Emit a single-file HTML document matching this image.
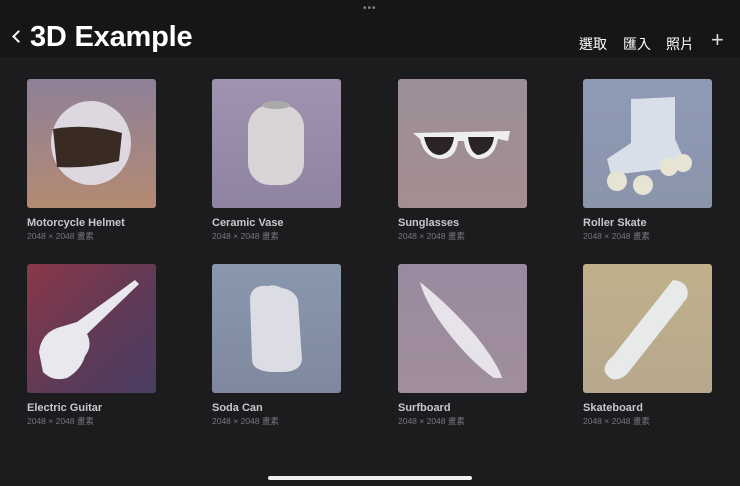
<!DOCTYPE html>
<html><head><meta charset="utf-8"><style>
*{margin:0;padding:0;box-sizing:border-box}
body{width:740px;height:486px;background:#1c1c1e;font-family:"Liberation Sans","Noto Sans CJK TC",sans-serif;color:#fff;position:relative;overflow:hidden}
.hdr{position:absolute;left:0;top:0;width:740px;height:57px;background:#161617}
.dots{position:absolute;left:363px;top:3px;font-size:10px;color:#888;letter-spacing:1px}
.title{position:absolute;left:30px;top:21px;font-size:29px;font-weight:bold;letter-spacing:-0.2px}
.back{position:absolute;left:14px;top:32px;width:9px;height:9px;border-left:2.5px solid #fff;border-bottom:2.5px solid #fff;transform:rotate(45deg);transform-origin:center}
.act{position:absolute;top:34px;font-size:14px;color:#fff}
.plus{position:absolute;left:711px;top:27px;font-size:22px;font-weight:200;color:#ddd}
.tile{position:absolute;width:129px;height:129px;border-radius:3px;overflow:hidden}
.lbl{position:absolute;font-size:11px;font-weight:bold;color:#c8c8cc}
.sub{position:absolute;font-size:8.5px;color:#77777c}
</style></head><body>
<div class="hdr"></div>
<div class="dots">•••</div>
<div class="back"></div>
<div class="title">3D Example</div>
<div class="act" style="left:579px">選取</div>
<div class="act" style="left:623px">匯入</div>
<div class="act" style="left:666px">照片</div>
<div class="plus">+</div>

<div class="tile" style="left:27px;top:79px;background:linear-gradient(#8e8099,#b48a72)">
<svg width="129" height="129"><ellipse cx="64" cy="64" rx="40" ry="42" fill="#ddd8e0"/><path d="M26 50 Q60 44 95 54 L92 82 Q60 90 30 88Z" fill="#3a2a24"/></svg></div>
<div class="tile" style="left:212px;top:79px;background:linear-gradient(#a093b0,#8f83a2)">
<svg width="129" height="129"><rect x="36" y="26" width="56" height="80" rx="22" fill="#d8d4d8"/><ellipse cx="64" cy="26" rx="14" ry="4" fill="#aaa"/></svg></div>
<div class="tile" style="left:398px;top:79px;background:linear-gradient(#9c8d98,#a48f90)">
<svg width="129" height="129"><path d="M15 54 L112 52 L110 62 L100 60 Q96 80 80 80 Q68 78 66 62 L60 62 Q58 80 42 80 Q26 78 22 60 Z" fill="#eee"/><path d="M26 58 Q30 76 42 76 Q54 74 56 58Z M70 58 Q72 74 80 76 Q94 74 96 58Z" fill="#2c2424"/></svg></div>
<div class="tile" style="left:583px;top:79px;background:linear-gradient(#8f9ab5,#8a95ab)">
<svg width="129" height="129"><path d="M48 20 L92 18 L92 60 L100 78 L80 90 L28 96 L24 80 L48 64Z" fill="#d9dfe8"/><circle cx="34" cy="102" r="10" fill="#e8e4d4"/><circle cx="60" cy="106" r="10" fill="#e8e4d4"/><circle cx="86" cy="88" r="9" fill="#e8e4d4"/><circle cx="100" cy="84" r="9" fill="#e8e4d4"/></svg></div>

<div class="tile" style="left:27px;top:264px;background:linear-gradient(135deg,#8a3848,#5c3a58 60%,#4a3e62)">
<svg width="129" height="129"><path d="M12 88 Q14 70 30 64 L50 58 L108 16 L112 20 L60 70 Q66 82 58 92 Q54 106 40 114 Q26 118 16 108Z" fill="#e8e8ee"/></svg></div>
<div class="tile" style="left:212px;top:264px;background:linear-gradient(#8998ad,#7f889e)">
<svg width="129" height="129"><path d="M38 34 Q40 20 56 22 Q62 20 70 24 Q82 26 86 36 L90 96 Q88 108 70 108 L58 108 Q40 106 40 96Z" fill="#dcdce4"/></svg></div>
<div class="tile" style="left:398px;top:264px;background:linear-gradient(#9a8aa0,#a08e9c)">
<svg width="129" height="129"><path d="M22 18 Q50 40 78 72 Q100 100 104 114 L96 114 Q76 100 56 76 Q28 42 22 18Z" fill="#e6e4ea"/></svg></div>
<div class="tile" style="left:583px;top:264px;background:linear-gradient(#c0b08a,#b7a88e)">
<svg width="129" height="129"><path d="M90 16 Q108 18 104 34 L44 110 Q30 122 22 108 Q20 100 30 92Z" fill="#e8eaea"/></svg></div>

<div class="lbl" style="left:27px;top:217px">Motorcycle Helmet</div><div class="sub" style="left:27px;top:230px">2048 × 2048 畫素</div>
<div class="lbl" style="left:212px;top:217px">Ceramic Vase</div><div class="sub" style="left:212px;top:230px">2048 × 2048 畫素</div>
<div class="lbl" style="left:398px;top:217px">Sunglasses</div><div class="sub" style="left:398px;top:230px">2048 × 2048 畫素</div>
<div class="lbl" style="left:583px;top:217px">Roller Skate</div><div class="sub" style="left:583px;top:230px">2048 × 2048 畫素</div>
<div class="lbl" style="left:27px;top:402px">Electric Guitar</div><div class="sub" style="left:27px;top:415px">2048 × 2048 畫素</div>
<div class="lbl" style="left:212px;top:402px">Soda Can</div><div class="sub" style="left:212px;top:415px">2048 × 2048 畫素</div>
<div class="lbl" style="left:398px;top:402px">Surfboard</div><div class="sub" style="left:398px;top:415px">2048 × 2048 畫素</div>
<div class="lbl" style="left:583px;top:402px">Skateboard</div><div class="sub" style="left:583px;top:415px">2048 × 2048 畫素</div>
<div style="position:absolute;left:268px;top:476px;width:204px;height:4px;border-radius:2px;background:#f0f0f0"></div>
</body></html>
